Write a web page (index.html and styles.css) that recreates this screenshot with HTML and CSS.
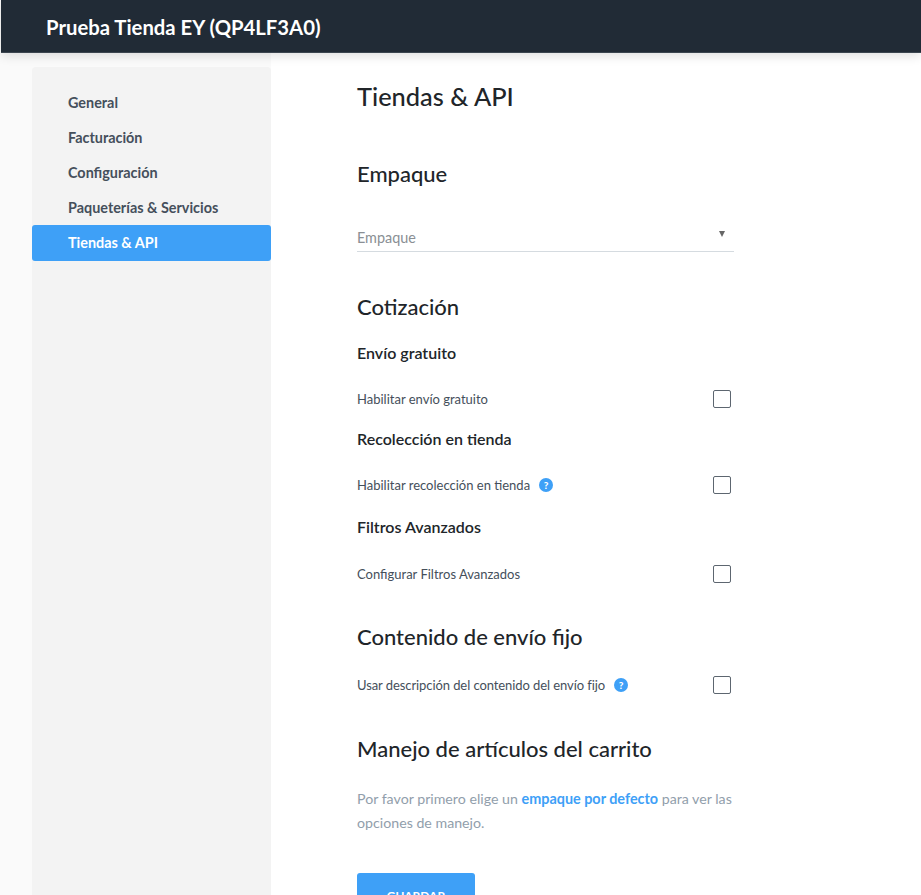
FILE: index.html
```html
<!DOCTYPE html>
<html lang="es">
<head>
    <meta charset="UTF-8">
    <meta name="viewport" content="width=device-width, initial-scale=1.0">
    <title>Tiendas &amp; API</title>
    <link rel="stylesheet" href="styles.css">
</head>
<body>
    <header class="topbar">Prueba Tienda EY (QP4LF3A0)</header>

    <div class="layout">
        <nav class="sidebar">
            <a class="nav-item">General</a>
            <a class="nav-item">Facturación</a>
            <a class="nav-item">Configuración</a>
            <a class="nav-item">Paqueterías &amp; Servicios</a>
            <a class="nav-item active">Tiendas &amp; API</a>
        </nav>

        <main class="content">
            <h1 class="page-title">Tiendas &amp; API</h1>

            <h2 class="section-title packing-title">Empaque</h2>
            <div class="select">
                <span>Empaque</span>
                <span class="select-arrow"></span>
            </div>

            <h2 class="section-title quote-title">Cotización</h2>

            <h3 class="sub-title first">Envío gratuito</h3>
            <div class="option">
                <span class="option-label">Habilitar envío gratuito</span>
                <span class="checkbox"></span>
            </div>

            <h3 class="sub-title">Recolección en tienda</h3>
            <div class="option">
                <span class="option-label">Habilitar recolección en tienda <span class="help">?</span></span>
                <span class="checkbox"></span>
            </div>

            <h3 class="sub-title filters">Filtros Avanzados</h3>
            <div class="option filters-option">
                <span class="option-label">Configurar Filtros Avanzados</span>
                <span class="checkbox"></span>
            </div>

            <h2 class="section-title fixed-title">Contenido de envío fijo</h2>
            <div class="option fixed-option">
                <span class="option-label">Usar descripción del contenido del envío fijo <span class="help">?</span></span>
                <span class="checkbox"></span>
            </div>

            <h2 class="section-title cart-title">Manejo de artículos del carrito</h2>
            <p class="note">Por favor primero elige un <a class="note-link">empaque por defecto</a> para ver las opciones de manejo.</p>

            <button class="save">GUARDAR</button>
        </main>
    </div>
</body>
</html>
```

FILE: styles.css
```css
* {
    box-sizing: border-box;
}
html, body {
    height: 895px;
    overflow: hidden;
}
body {
    margin: 0;
    background: #fafafa;
    font-family: Lato, "Liberation Sans", sans-serif;
    color: #212529;
}
.topbar {
    position: relative;
    height: 53px;
    margin-left: 1px;
    padding: 15px 0 0 45px;
    background: #212b36;
    border-bottom: 1px solid #3c4650;
    box-shadow: 0 3px 10px rgba(0,0,0,0.12);
    color: white;
    font-size: 20.3px;
    font-weight: 700;
    line-height: 24px;
}
.layout {
    display: flex;
    padding-left: 32px;
    height: 842px;
}
.sidebar {
    width: 239px;
    margin-top: 14px;
    padding-top: 18px;
    background: #f3f3f3;
    border-radius: 4px 4px 0 0;
}
.nav-item {
    display: block;
    height: 35px;
    padding: 0 0 0 36px;
    color: #454f5b;
    font-size: 14.4px;
    font-weight: 700;
    line-height: 35px;
}
.nav-item.active {
    height: 36px;
    background: #3ea0f7;
    border-radius: 3px;
    color: white;
}
.content {
    flex: 1;
    padding: 0 187px 0 86px;
    background: white;
    overflow: hidden;
}
.page-title {
    margin: 27px 0 0;
    font-size: 25.4px;
    font-weight: 500;
    line-height: 32px;
}
.section-title {
    margin: 0;
    font-size: 22px;
    font-weight: 500;
    line-height: 28px;
}
.packing-title {
    margin-top: 48px;
}
.select {
    display: flex;
    justify-content: space-between;
    height: 37px;
    margin-top: 27px;
    padding-top: 14px;
    border-bottom: 1px solid #d5dbe0;
    color: #8a8f94;
    font-size: 14.4px;
    line-height: 18px;
}
.select-arrow {
    width: 0;
    height: 0;
    margin: 2px 9px 0 0;
    border-left: 3px solid transparent;
    border-right: 3px solid transparent;
    border-top: 6px solid #666;
}
.quote-title {
    margin-top: 41px;
}
.sub-title {
    margin: 19px 0 0;
    font-size: 16px;
    font-weight: 600;
    line-height: 22px;
}
.sub-title.first {
    margin-top: 21px;
}
.sub-title.filters {
    margin-top: 21px;
}
.option {
    display: flex;
    justify-content: space-between;
    align-items: center;
    height: 20px;
    margin-top: 25px;
    padding-right: 3px;
    color: #454f5b;
    font-size: 13px;
}
.filters-option {
    margin-top: 26px;
}
.option-label {
    display: flex;
    align-items: center;
    gap: 9px;
}
.help {
    display: inline-block;
    width: 14px;
    height: 14px;
    background: #3ea0f7;
    border-radius: 50%;
    color: white;
    font-size: 10px;
    font-weight: 900;
    line-height: 14px;
    text-align: center;
}
.checkbox {
    width: 18px;
    height: 18px;
    background: white;
    border: 1px solid #5d6670;
    border-radius: 2px;
}
.fixed-title {
    margin-top: 39px;
}
.fixed-option {
    margin-top: 24px;
    letter-spacing: -0.08px;
}
.cart-title {
    margin-top: 40px;
}
.note {
    margin: 24px 0 0;
    color: #919eab;
    font-size: 14.2px;
    line-height: 24px;
}
.note-link {
    color: #3ea0f7;
    font-size: 14.4px;
    font-weight: 700;
}
.save {
    display: block;
    width: 118px;
    height: 44px;
    margin-top: 38px;
    background: #3ea0f7;
    border: none;
    border-radius: 3px;
    color: white;
    font-family: Lato, "Liberation Sans", sans-serif;
    font-size: 12px;
    font-weight: 700;
}
```
